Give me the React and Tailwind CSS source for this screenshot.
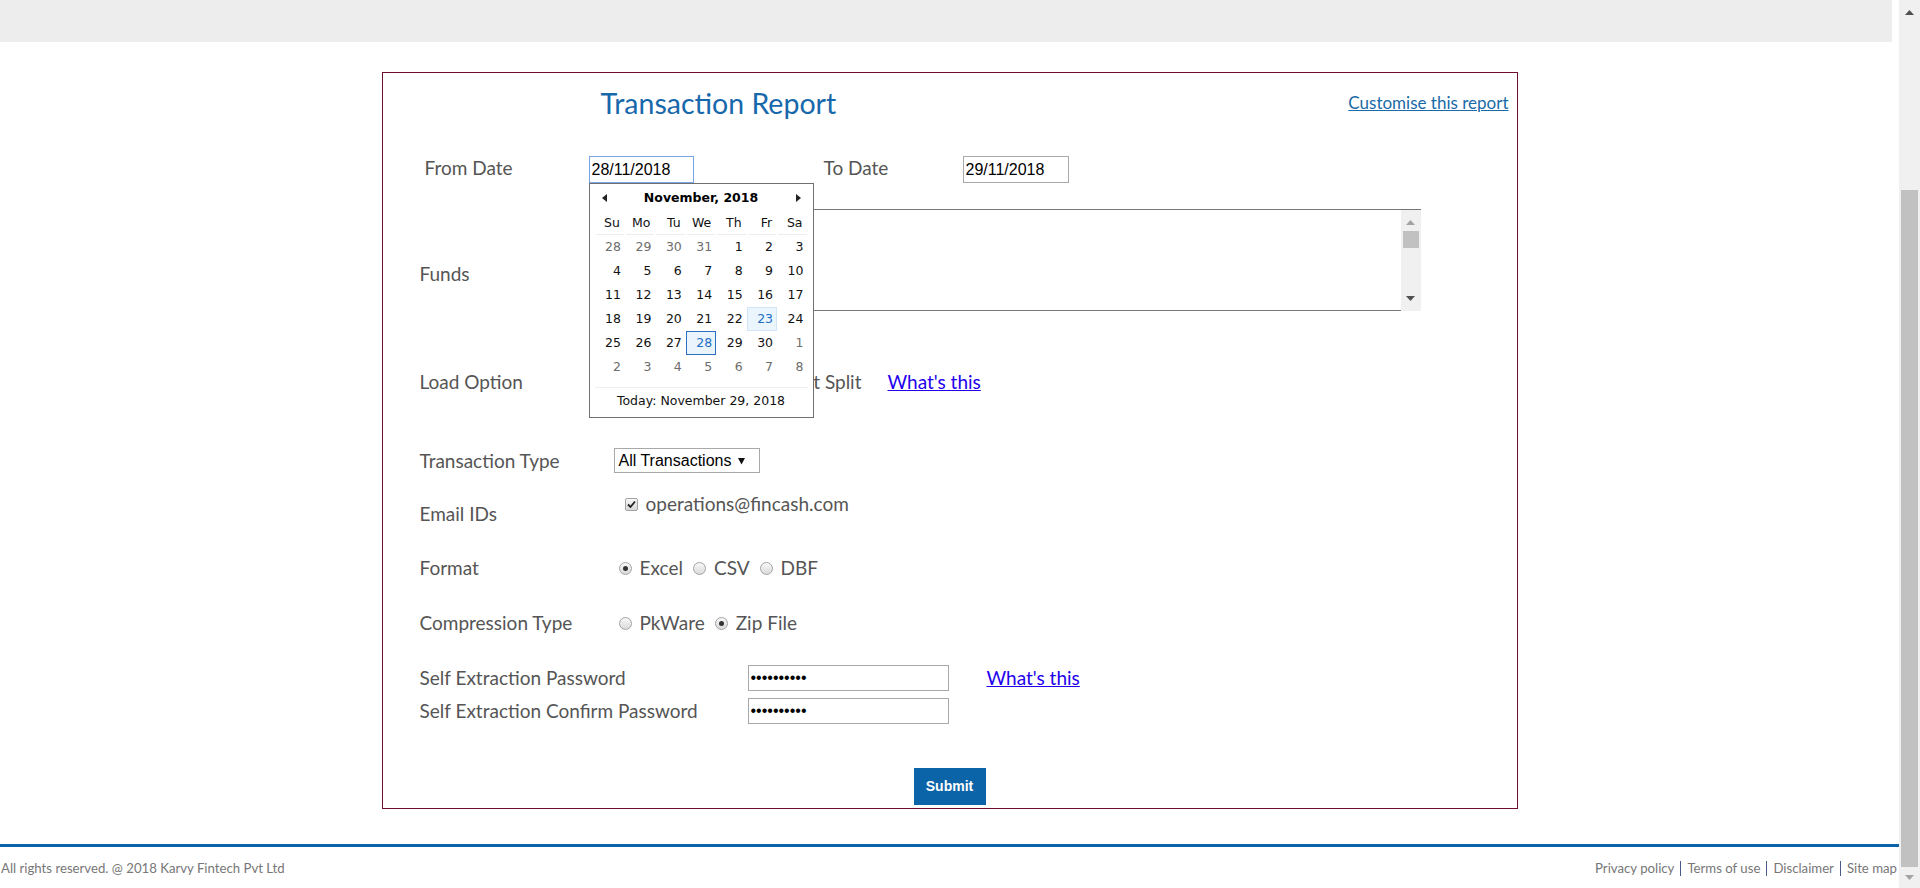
import React from 'react';

const labelCls = "text-[19px] leading-[24px] text-[#555555] font-['Lato',sans-serif]";
const arialCls = "font-['Liberation_Sans',Arial,sans-serif]";

function Radio({ checked }) {
  return (
    <span className="w-[13px] h-[13px] rounded-full border border-[#a3a3a3] bg-gradient-to-b from-[#f8f8f8] to-[#dadada] flex items-center justify-center shrink-0">
      {checked && <span className="w-[5px] h-[5px] rounded-full bg-[#333333]" />}
    </span>
  );
}

function Checkbox() {
  return (
    <span className="w-[13px] h-[13px] rounded-[2px] border border-[#a3a3a3] bg-gradient-to-b from-[#f8f8f8] to-[#d8d8d8] flex items-center justify-center shrink-0">
      <svg width="9" height="9" viewBox="0 0 9 9">
        <path d="M1 4.5 L3.5 7 L8 1.5" fill="none" stroke="#222" strokeWidth="1.8" />
      </svg>
    </span>
  );
}

const weeks = [
  [[28, 1], [29, 1], [30, 1], [31, 1], [1], [2], [3]],
  [[4], [5], [6], [7], [8], [9], [10]],
  [[11], [12], [13], [14], [15], [16], [17]],
  [[18], [19], [20], [21], [22], [23], [24]],
  [[25], [26], [27], [28], [29], [30], [1, 1]],
  [[2, 1], [3, 1], [4, 1], [5, 1], [6, 1], [7, 1], [8, 1]],
];

function Calendar() {
  return (
    <div className="absolute left-0 top-full w-[225px] h-[235px] bg-white border border-[#707070] z-10 font-['DejaVu_Sans',Verdana,sans-serif] text-[12.5px]">
      <div className="flex items-center justify-between h-[28px] px-[12px]">
        <svg width="5" height="8" viewBox="0 0 5 8"><path d="M5 0 L0 4 L5 8 Z" fill="#222" /></svg>
        <span className="font-bold text-black">November, 2018</span>
        <svg width="5" height="8" viewBox="0 0 5 8"><path d="M0 0 L5 4 L0 8 Z" fill="#222" /></svg>
      </div>
      <div className="px-[5px]">
        <div className="grid grid-cols-7 h-[23px]">
          {['Su', 'Mo', 'Tu', 'We', 'Th', 'Fr', 'Sa'].map((d) => (
            <div key={d} className="mx-[1px] border-b border-[#eeeeee] text-right pr-[4px] leading-[22px] text-[#111]">
              {d}
            </div>
          ))}
        </div>
        {weeks.map((w, i) => (
          <div key={i} className="grid grid-cols-7 h-[24px]">
            {w.map(([n, other], j) => {
              const isToday = i === 3 && j === 5;
              const isSel = i === 4 && j === 3;
              let cls = 'text-right pr-[3px] leading-[22px] border ';
              if (isSel) cls += 'border-[#2a70c0] bg-[#eaf4fd] text-[#1f6fc5]';
              else if (isToday) cls += 'border-[#d2e6f8] bg-[#eaf5fe] text-[#1f6fc5]';
              else cls += 'border-transparent ' + (other ? 'text-[#6d6d6d]' : 'text-[#111]');
              return (
                <div key={j} className={cls}>
                  {n}
                </div>
              );
            })}
          </div>
        ))}
      </div>
      <div className="mx-[5px] mt-[8px] border-t border-[#eeeeee] h-[28px] flex items-center justify-center text-[#111]">
        Today: November 29, 2018
      </div>
    </div>
  );
}

function ListScroll() {
  return (
    <div className="w-[20px] h-full bg-[#f0f0f0] flex flex-col items-center">
      <svg className="mt-[10px]" width="9" height="5" viewBox="0 0 9 5"><path d="M0 5 L4.5 0 L9 5 Z" fill="#a3a3a3" /></svg>
      <div className="mt-[6px] w-[16px] h-[17px] bg-[#c1c1c1]" />
      <div className="flex-1" />
      <svg className="mb-[10px]" width="9" height="5" viewBox="0 0 9 5"><path d="M0 0 L4.5 5 L9 0 Z" fill="#505050" /></svg>
    </div>
  );
}

export default function App() {
  return (
    <div className="flex w-[1920px] h-[888px] overflow-hidden bg-white">
      <div className="w-[1899px] flex flex-col">
        <div className="h-[42px] w-[1892px] bg-[#ededed]" />

        <div className="mt-[30px] mx-auto w-[1136px] h-[737px] border border-[#6d0f2d] flex flex-col">
          {/* title */}
          <div className="mt-[12px] h-[36px] flex items-center justify-between pl-[218px] pr-[8px] font-['Lato',sans-serif]">
            <h1 className="text-[28.5px] text-[#1868ac]">Transaction Report</h1>
            <a href="#" className="text-[17px] text-[#1a6aa8] underline">Customise this report</a>
          </div>

          {/* dates */}
          <div className="mt-[35px] h-[27px] flex items-center pl-[42px]">
            <span className={`${labelCls} w-[164px] -mt-[4px]`}>From Date</span>
            <div className="relative">
              <input
                readOnly
                value="28/11/2018"
                className={`${arialCls} w-[105px] h-[27px] border border-[#78a3e4] px-[2px] text-[16px] text-black outline-none`}
              />
              <Calendar />
            </div>
            <span className={`${labelCls} ml-[130px] w-[139px] -mt-[4px]`}>To Date</span>
            <input
              readOnly
              value="29/11/2018"
              className={`${arialCls} w-[106px] h-[27px] border border-[#a9a9a9] px-[2px] text-[16px] text-black outline-none`}
            />
          </div>

          {/* funds */}
          <div className="mt-[26px] h-[102px] flex pl-[37px]">
            <span className={`${labelCls} w-[193px] mt-[53px]`}>Funds</span>
            <div className="w-[808px] h-full flex">
              <div className="flex-1 border-t border-b border-[#767676]" />
              <div className="border-t border-[#767676]">
                <ListScroll />
              </div>
            </div>
          </div>

          {/* load option */}
          <div className="mt-[59px] h-[24px] flex items-center pl-[37px]">
            <span className={`${labelCls} w-[193px]`}>Load Option</span>
            <div className="w-[249px] flex items-center justify-end gap-[8px]">
              <Radio checked />
              <span className={labelCls}>Default</span>
              <Radio />
              <span className={labelCls}>Account Split</span>
            </div>
            <a href="#" className="ml-[26px] text-[19px] leading-[24px] text-[#2200ee] underline font-['Lato',sans-serif]">What's this</a>
          </div>

          {/* transaction type */}
          <div className="mt-[54px] h-[25px] flex items-center pl-[37px]">
            <span className={`${labelCls} w-[194px]`}>Transaction Type</span>
            <div className={`${arialCls} w-[146px] h-[25px] border border-[#a9a9a9] flex items-center pl-[4px] text-[16px] text-black`}>
              All Transactions
              <svg className="ml-[7px]" width="7" height="8" viewBox="0 0 7 8"><path d="M0 1 L7 1 L3.5 7.5 Z" fill="#111" /></svg>
            </div>
          </div>

          {/* email */}
          <div className="mt-[19px] flex items-start pl-[37px]">
            <span className={`${labelCls} w-[205px] mt-[10px]`}>Email IDs</span>
            <div className="h-[24px] flex items-center gap-[8px]">
              <Checkbox />
              <span className={labelCls}>operations@fincash.com</span>
            </div>
          </div>

          {/* format */}
          <div className="mt-[30px] h-[24px] flex items-center pl-[37px]">
            <span className={`${labelCls} w-[199px]`}>Format</span>
            <Radio checked />
            <span className={`${labelCls} ml-[8px] mr-[10px]`}>Excel</span>
            <Radio />
            <span className={`${labelCls} ml-[8px] mr-[10px]`}>CSV</span>
            <Radio />
            <span className={`${labelCls} ml-[8px]`}>DBF</span>
          </div>

          {/* compression */}
          <div className="mt-[31px] h-[24px] flex items-center pl-[37px]">
            <span className={`${labelCls} w-[199px]`}>Compression Type</span>
            <Radio />
            <span className={`${labelCls} ml-[8px] mr-[10px]`}>PkWare</span>
            <Radio checked />
            <span className={`${labelCls} ml-[8px]`}>Zip File</span>
          </div>

          {/* passwords */}
          <div className="mt-[30px] h-[26px] flex items-center pl-[37px]">
            <span className={`${labelCls} w-[328px]`}>Self Extraction Password</span>
            <input
              readOnly
              type="password"
              value="fincash123"
              className={`${arialCls} w-[201px] h-[26px] border border-[#a9a9a9] px-[2px] text-[16px] text-black outline-none`}
            />
            <a href="#" className="ml-[38px] text-[19px] leading-[24px] text-[#2200ee] underline font-['Lato',sans-serif]">What's this</a>
          </div>
          <div className="mt-[7px] h-[26px] flex items-center pl-[37px]">
            <span className={`${labelCls} w-[328px]`}>Self Extraction Confirm Password</span>
            <input
              readOnly
              type="password"
              value="fincash123"
              className={`${arialCls} w-[201px] h-[26px] border border-[#a9a9a9] px-[2px] text-[16px] text-black outline-none`}
            />
          </div>

          {/* submit */}
          <div className="mt-[44px] flex justify-center">
            <button className={`${arialCls} w-[72px] h-[37px] bg-[#0b64a8] text-white font-bold text-[14px]`}>
              Submit
            </button>
          </div>
        </div>

        {/* footer */}
        <div className="mt-[35px] h-[3px] bg-[#0b64a8]" />
        <div className="mt-[12px] h-[20px] flex items-center justify-between pl-[1px] pr-[2px] text-[13.2px] text-[#777777] font-['Lato',sans-serif]">
          <span>All rights reserved. @ 2018 Karvy Fintech Pvt Ltd</span>
          <div className="flex items-center">
            <a href="#">Privacy policy</a>
            <span className="mx-[6px] w-[1px] h-[15px] bg-[#4b5a8a]" />
            <a href="#">Terms of use</a>
            <span className="mx-[6px] w-[1px] h-[15px] bg-[#4b5a8a]" />
            <a href="#">Disclaimer</a>
            <span className="mx-[6px] w-[1px] h-[15px] bg-[#4b5a8a]" />
            <a href="#">Site map</a>
          </div>
        </div>
      </div>

      {/* page scrollbar */}
      <div className="w-[21px] h-full bg-[#f0f0f0] flex flex-col items-center">
        <svg className="mt-[10px]" width="9" height="5" viewBox="0 0 9 5"><path d="M0 5 L4.5 0 L9 5 Z" fill="#505050" /></svg>
        <div className="mt-[175px] w-[17px] h-[677px] bg-[#c1c1c1]" />
        <svg className="mt-[8px]" width="9" height="5" viewBox="0 0 9 5"><path d="M0 0 L4.5 5 L9 0 Z" fill="#a3a3a3" /></svg>
      </div>
    </div>
  );
}
